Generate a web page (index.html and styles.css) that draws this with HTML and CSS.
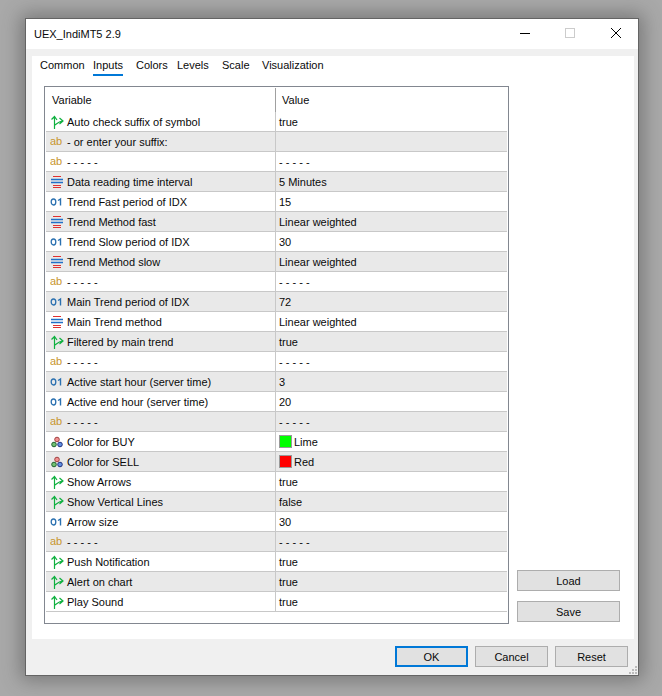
FILE: index.html
```html
<!DOCTYPE html>
<html lang="en">
<head>
<meta charset="utf-8">
<title>UEX_IndiMT5 2.9</title>
<link rel="stylesheet" href="styles.css">
</head>
<body>
<svg class="defs" width="0" height="0" aria-hidden="true">
  <symbol id="i-bool" viewBox="0 0 14 14">
    <path d="M4.500 14V1.500M1.500 4.500l3-3 2.500 3.500M5 10C7 8.500 9 6.500 12.500 6M9.500 3 13 6l-3.500 3" fill="none" stroke="#10b040" stroke-width="1.200"/>
  </symbol>
  <symbol id="i-enum" viewBox="0 0 14 14">
    <path d="M3 1.500h8" stroke="#e03030" stroke-width="1"/>
    <path d="M1 4.500h12M1 7.500h12" stroke="#2070c8" stroke-width="1.300"/>
    <path d="M3 10.500h8M3 12.500h8" stroke="#e03030" stroke-width="1"/>
  </symbol>
  <symbol id="i-int" viewBox="0 0 14 12">
    <ellipse cx="3.500" cy="6" rx="2.300" ry="3" fill="none" stroke="#2a70b0" stroke-width="1.300"/>
    <path d="M8 4.500l2.500-1.500V9.500" fill="none" stroke="#2a70b0" stroke-width="1.400"/>
  </symbol>
  <symbol id="i-color" viewBox="0 0 14 14">
    <circle cx="7" cy="4.500" r="2.300" fill="#f09090" stroke="#a04040"/>
    <circle cx="4" cy="9.500" r="2.300" fill="#70c070" stroke="#206030"/>
    <circle cx="10" cy="9.500" r="2.300" fill="#6090e0" stroke="#203080"/>
  </symbol>
</svg>
<main class="window">
  <header class="titlebar">
    <h1 class="title">UEX_IndiMT5 2.9</h1>
    <div class="controls">
      <svg class="ctl" viewBox="0 0 46 30"><path d="M20 14.500h10" stroke="#000" stroke-width="1"/></svg>
      <svg class="ctl" viewBox="0 0 46 30"><rect x="19.500" y="9.500" width="9" height="9" fill="none" stroke="#ccc"/></svg>
      <svg class="ctl" viewBox="0 0 46 30"><path d="M19 9l10 10M29 9l-10 10" stroke="#000" stroke-width="1"/></svg>
    </div>
  </header>
  <div class="body">
    <section class="panel">
      <nav class="tabs">
        <span class="tab">Common</span>
        <span class="tab active">Inputs</span>
        <span class="tab">Colors</span>
        <span class="tab">Levels</span>
        <span class="tab">Scale</span>
        <span class="tab">Visualization</span>
      </nav>
      <div class="content">
        <div class="table">
          <div class="row head"><div class="c1">Variable</div><div class="c2">Value</div></div>
          <div class="row"><div class="c1"><svg class="ic"><use href="#i-bool"/></svg>Auto check suffix of symbol</div><div class="c2">true</div></div>
          <div class="row"><div class="c1"><span class="ic ab">ab</span>- or enter your suffix:</div><div class="c2"></div></div>
          <div class="row"><div class="c1"><span class="ic ab">ab</span>- - - - -</div><div class="c2">- - - - -</div></div>
          <div class="row"><div class="c1"><svg class="ic"><use href="#i-enum"/></svg>Data reading time interval</div><div class="c2">5 Minutes</div></div>
          <div class="row"><div class="c1"><svg class="ic"><use href="#i-int"/></svg>Trend Fast period of IDX</div><div class="c2">15</div></div>
          <div class="row"><div class="c1"><svg class="ic"><use href="#i-enum"/></svg>Trend Method fast</div><div class="c2">Linear weighted</div></div>
          <div class="row"><div class="c1"><svg class="ic"><use href="#i-int"/></svg>Trend Slow period of IDX</div><div class="c2">30</div></div>
          <div class="row"><div class="c1"><svg class="ic"><use href="#i-enum"/></svg>Trend Method slow</div><div class="c2">Linear weighted</div></div>
          <div class="row"><div class="c1"><span class="ic ab">ab</span>- - - - -</div><div class="c2">- - - - -</div></div>
          <div class="row"><div class="c1"><svg class="ic"><use href="#i-int"/></svg>Main Trend period of IDX</div><div class="c2">72</div></div>
          <div class="row"><div class="c1"><svg class="ic"><use href="#i-enum"/></svg>Main Trend method</div><div class="c2">Linear weighted</div></div>
          <div class="row"><div class="c1"><svg class="ic"><use href="#i-bool"/></svg>Filtered by main trend</div><div class="c2">true</div></div>
          <div class="row"><div class="c1"><span class="ic ab">ab</span>- - - - -</div><div class="c2">- - - - -</div></div>
          <div class="row"><div class="c1"><svg class="ic"><use href="#i-int"/></svg>Active start hour (server time)</div><div class="c2">3</div></div>
          <div class="row"><div class="c1"><svg class="ic"><use href="#i-int"/></svg>Active end hour (server time)</div><div class="c2">20</div></div>
          <div class="row"><div class="c1"><span class="ic ab">ab</span>- - - - -</div><div class="c2">- - - - -</div></div>
          <div class="row"><div class="c1"><svg class="ic"><use href="#i-color"/></svg>Color for BUY</div><div class="c2"><span class="swatch lime"></span>Lime</div></div>
          <div class="row"><div class="c1"><svg class="ic"><use href="#i-color"/></svg>Color for SELL</div><div class="c2"><span class="swatch red"></span>Red</div></div>
          <div class="row"><div class="c1"><svg class="ic"><use href="#i-bool"/></svg>Show Arrows</div><div class="c2">true</div></div>
          <div class="row"><div class="c1"><svg class="ic"><use href="#i-bool"/></svg>Show Vertical Lines</div><div class="c2">false</div></div>
          <div class="row"><div class="c1"><svg class="ic"><use href="#i-int"/></svg>Arrow size</div><div class="c2">30</div></div>
          <div class="row"><div class="c1"><span class="ic ab">ab</span>- - - - -</div><div class="c2">- - - - -</div></div>
          <div class="row"><div class="c1"><svg class="ic"><use href="#i-bool"/></svg>Push Notification</div><div class="c2">true</div></div>
          <div class="row"><div class="c1"><svg class="ic"><use href="#i-bool"/></svg>Alert on chart</div><div class="c2">true</div></div>
          <div class="row"><div class="c1"><svg class="ic"><use href="#i-bool"/></svg>Play Sound</div><div class="c2">true</div></div>
        </div>
        <aside class="side">
          <button class="btn wide">Load</button>
          <button class="btn wide">Save</button>
        </aside>
      </div>
    </section>
    <footer class="footer">
      <button class="btn small default">OK</button>
      <button class="btn small">Cancel</button>
      <button class="btn small">Reset</button>
    </footer>
    <svg class="grip" viewBox="0 0 10 10"><path d="M7 1h2v2H7zM4 4h2v2H4zM7 4h2v2H7zM1 7h2v2H1zM4 7h2v2H4zM7 7h2v2H7z" fill="#bbb"/></svg>
  </div>
</main>
</body>
</html>
```
FILE: styles.css
```css
* { box-sizing: border-box; }
html, body { height: 100%; }
body {
  margin: 0;
  padding: 18px 0 0 25px;
  background: #a9a9a9;
  overflow: hidden;
  font-family: "Liberation Sans", Arial, sans-serif;
  font-size: 11px;
  color: #0a0a0a;
}
.defs { position: absolute; }
.window {
  width: 614px;
  height: 658px;
  background: #f0f0f0;
  border: 1px solid #646464;
  display: flex;
  flex-direction: column;
  box-shadow: 0 0 18px 4px rgba(60, 60, 60, .45);
}
.titlebar {
  height: 30px;
  flex: none;
  background: #fff;
  display: flex;
  align-items: center;
  justify-content: space-between;
  padding-left: 8px;
}
.title { margin: 0; font-size: 11px; font-weight: 400; }
.controls { display: flex; }
.ctl { width: 46px; height: 30px; display: block; }
.body { flex: 1; position: relative; display: flex; flex-direction: column; padding: 7px 4px 0 6px; }
.panel { height: 583px; flex: none; background: #fff; display: flex; flex-direction: column; }
.tabs {
  display: grid;
  grid-template-columns: 53px 43px 41px 45px 40px auto;
  height: 30px;
  flex: none;
  padding-left: 8px;
}
.tab { height: 20px; line-height: 19px; justify-self: start; }
.tab.active { border-bottom: 2px solid #0078d7; }
.content { display: flex; padding: 0 0 0 12px; gap: 8px; }
.table { width: 465px; height: 538px; border: 1px solid #828790; background: #fff; flex: none; padding: 1px 0 0 1px; }
.row { display: flex; height: 20px; border-bottom: 1px solid #c8c8c8; margin-right: 1px; }
.row:nth-child(odd) { background: #e9e9e9; }
.row.head { height: 24px; background: #fff; border-bottom: 0; }
.c1, .c2 { display: flex; align-items: center; white-space: nowrap; }
.c1 { width: 230px; padding-left: 4px; border-right: 1px solid #c8c8c8; }
.c2 { flex: 1; padding-left: 3px; }
.head .c1 { padding-left: 6px; border-right-color: #a0a0a0; }
.head .c2 { padding-left: 6px; }
.ic { width: 14px; height: 14px; margin-right: 3px; flex: none; }
.ab { font-size: 11px; line-height: 14px; color: #c8952e; margin-bottom: 2px; }
.swatch { width: 13px; height: 13px; margin-right: 2px; border: 1px solid #999; }
.lime { background: #00ff00; }
.red { background: #ff0000; }
.side { display: flex; flex-direction: column; gap: 10px; padding-top: 484px; }
.btn {
  font: inherit;
  color: inherit;
  background: #e1e1e1;
  border: 1px solid #adadad;
  padding: 0;
  height: 21px;
}
.wide { width: 103px; }
.small { width: 73px; }
.default { border: 2px solid #0078d7; }
.footer { display: flex; justify-content: flex-end; gap: 7px; padding: 7px 6px 0 0; }
.grip { position: absolute; right: 0; bottom: 0; width: 10px; height: 10px; }
```
